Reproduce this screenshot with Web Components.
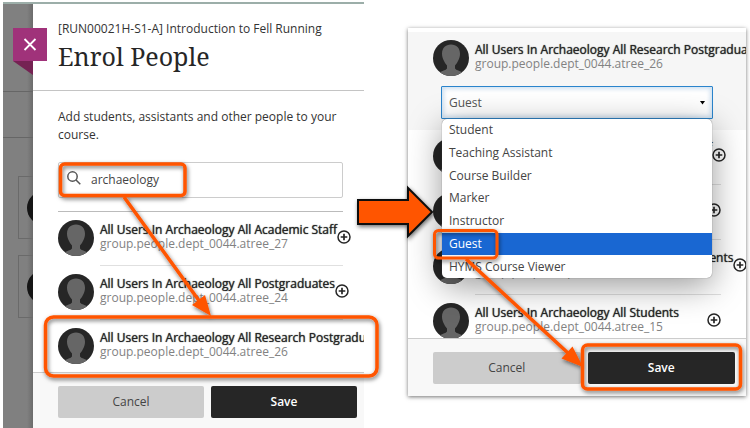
<!DOCTYPE html>
<html lang="en">
<head>
<meta charset="utf-8">
<meta name="viewport" content="width=device-width, initial-scale=1">
<title>Enrol People</title>
<style>
    body {
        margin: 0;
        background: #fff;
        color: #333;
        font: 12px/18px "Open Sans", "Noto Sans", sans-serif;
    }
</style>
</head>
<body>
<enrol-guide>
    <enrol-sheet slot="search" course="[RUN00021H-S1-A] Introduction to Fell Running" heading="Enrol People">
        <p slot="intro">Add students, assistants and other people to your course.</p>
        <people-search slot="intro" value="archaeology"></people-search>
        <person-row name="All Users In Archaeology All Academic Staff" group="group.people.dept_0044.atree_27" addable></person-row>
        <person-row name="All Users In Archaeology All Postgraduates" group="group.people.dept_0044.atree_24" addable></person-row>
        <person-row name="All Users In Archaeology All Research Postgraduates" group="group.people.dept_0044.atree_26"></person-row>
        <action-bar slot="footer"></action-bar>
    </enrol-sheet>
    <role-card slot="role">
        <person-row slot="selected" name="All Users In Archaeology All Research Postgraduates" group="group.people.dept_0044.atree_26"></person-row>
        <role-picker slot="selected" value="Guest"></role-picker>
        <person-row name="All Users In Archaeology All Academic Staff" group="group.people.dept_0044.atree_27" addable></person-row>
        <person-row name="All Users In Archaeology All Staff" group="group.people.dept_0044.atree_25" addable></person-row>
        <person-row name="All Users In Archaeology All Research Students" group="group.people.dept_0044.atree_28" addable></person-row>
        <person-row name="All Users In Archaeology All Students" group="group.people.dept_0044.atree_15" addable></person-row>
        <action-bar slot="footer"></action-bar>
    </role-card>
</enrol-guide>

<script>
const html = String.raw

class UserAvatar extends HTMLElement {
    connectedCallback() {
        this.attachShadow({ mode: "open" })
        this.shadowRoot.innerHTML = html`
            <style>
                :host { display: block; width: 36px; height: 36px; flex: none; }
                svg { display: block; width: 100%; height: 100%; }
            </style>
            <svg viewBox="0 0 36 36" aria-hidden="true">
                <clipPath id="disc"><circle cx="18" cy="18" r="18"/></clipPath>
                <g clip-path="url(#disc)">
                    <rect width="36" height="36" fill="#262626"/>
                    <path fill="#666" d="M18 4.500c5.600 0 9 3.700 9 9.200 0 3.200-1 5-2 7.300-.8 1.900-1.900 3.300-3 4.400v3.200c1.200 1.800 4.800 2.400 8 3.900V36H6v-3.500c3.200-1.500 6.800-2.100 8-3.900v-3.200c-1.100-1.100-2.200-2.500-3-4.400-1-2.300-2-4.100-2-7.300 0-5.500 3.400-9.200 9-9.200z"/>
                </g>
            </svg>
        `
    }
}
customElements.define("user-avatar", UserAvatar)

class PersonRow extends HTMLElement {
    connectedCallback() {
        this.attachShadow({ mode: "open" })
        this.shadowRoot.innerHTML = this.render()
    }

    renderAdd() {
        if (!this.hasAttribute("addable"))
            return ""
        return html`
            <button aria-label="Add ${this.getAttribute("name")}">
                <svg viewBox="0 0 14 14" fill="none" stroke="#262626">
                    <circle cx="7" cy="7" r="6" stroke-width="1.500"/>
                    <path d="M7 3.700v6.600M3.700 7h6.600" stroke-width="1.700"/>
                </svg>
            </button>
        `
    }

    render() {
        return html`
            <style>
                :host { display: flex; gap: 6px; }
                .line {
                    flex: 1;
                    min-width: 0;
                    display: flex;
                    align-items: center;
                    white-space: nowrap;
                    box-sizing: border-box;
                    height: var(--row-height, 46px);
                    padding-bottom: 12px;
                    border-bottom: 1px solid var(--row-line, #e0e0e0);
                }
                .text { flex: 1 0 auto; line-height: 14px; }
                strong { display: block; font-weight: 500; color: #262626; text-shadow: 0 0 1px #262626; }
                span { display: block; color: #828282; }
                button { flex: none; width: 14px; height: 14px; padding: 0; border: 0; background: none; }
                svg { display: block; width: 14px; height: 14px; }
            </style>
            <user-avatar></user-avatar>
            <div class="line">
                <div class="text">
                    <strong>${this.getAttribute("name")}</strong>
                    <span>${this.getAttribute("group")}</span>
                </div>
                ${this.renderAdd()}
            </div>
        `
    }
}
customElements.define("person-row", PersonRow)

class ActionBar extends HTMLElement {
    connectedCallback() {
        this.attachShadow({ mode: "open" })
        this.shadowRoot.innerHTML = html`
            <style>
                :host {
                    display: grid;
                    grid-template-columns: 1fr 1fr;
                    gap: 7px;
                    padding: 13px var(--bar-end, 7px) var(--bar-bottom, 10px) 25px;
                    background: #f8f8f8;
                    border-top: 1px solid #ccc;
                }
                button {
                    height: 32px;
                    padding: 0;
                    border: 0;
                    border-radius: 2px;
                    background: #ccc;
                    color: #444;
                    font: inherit;
                }
                .save { background: #262626; color: #fff; font-weight: 600; }
            </style>
            <button>Cancel</button>
            <button class="save">Save</button>
        `
    }
}
customElements.define("action-bar", ActionBar)

class PeopleSearch extends HTMLElement {
    connectedCallback() {
        this.attachShadow({ mode: "open" })
        this.shadowRoot.innerHTML = html`
            <style>
                :host { display: block; }
                label {
                    display: flex;
                    align-items: center;
                    gap: 10px;
                    height: 34px;
                    padding: 0 8px;
                    border: 1px solid #ccc;
                    border-radius: 2px;
                }
                svg { flex: none; width: 14px; height: 14px; margin-bottom: 4px; }
                input {
                    flex: 1;
                    min-width: 0;
                    padding: 0;
                    border: 0;
                    outline: 0;
                    background: none;
                    color: #444;
                    font: inherit;
                }
            </style>
            <label>
                <svg viewBox="0 0 14 14" fill="none" stroke="#555" stroke-width="1.500" aria-hidden="true">
                    <circle cx="5.500" cy="5.500" r="4.700"/>
                    <path d="M9 9l4.300 4.300"/>
                </svg>
                <input type="text" aria-label="Search people" value="${this.getAttribute("value")}">
            </label>
        `
    }
}
customElements.define("people-search", PeopleSearch)

class EnrolSheet extends HTMLElement {
    connectedCallback() {
        this.attachShadow({ mode: "open" })
        this.shadowRoot.innerHTML = this.render()
    }

    render() {
        return html`
            <style>
                :host {
                    display: grid;
                    grid-template-columns: 30px minmax(0, 1fr);
                    overflow: hidden;
                    box-sizing: border-box;
                    border-top: 2px solid #9caea9;
                    --row-height: 46px;
                }
                .behind {
                    display: flex;
                    flex-direction: column;
                    overflow: hidden;
                    background: linear-gradient(90deg, #808080 24px, #6c6c6c);
                }
                .strip { flex: none; box-sizing: border-box; border-bottom: 1px solid #666; height: 88px; }
                .strip.low { height: 46px; }
                .tile {
                    flex: none;
                    display: flex;
                    align-items: center;
                    box-sizing: border-box;
                    height: 63px;
                    margin: 38px 0 0 15px;
                    padding-left: 8px;
                    border: 1px solid #6a6a6a;
                    border-right: 0;
                }
                .tile + .tile { margin-top: 16px; }
                .tile i { flex: none; width: 34px; height: 34px; border-radius: 50%; background: #151515; }
                .sheet { position: relative; display: flex; flex-direction: column; min-width: 0; background: #fff; }
                .close {
                    position: absolute;
                    top: 24px;
                    left: -20px;
                    width: 34px;
                    height: 47px;
                    padding: 0;
                    border: 0;
                    background: none;
                }
                .close svg { display: block; }
                header { padding: 16px 25px 15px; border-bottom: 1px solid #c4c4c4; }
                header p { margin: 0; }
                h1 {
                    margin: 0;
                    color: #262626;
                    font: 25px/37px "Noto Serif", "DejaVu Serif", serif;
                }
                .body { flex: 1; padding: 17px 21px 0 25px; }
                .intro { display: grid; gap: 18px; padding-bottom: 13px; border-bottom: 1px solid #bbb; }
                .list {
                    display: grid;
                    grid-template-columns: minmax(0, 1fr);
                    gap: 8px;
                    padding-top: 8px;
                    margin-bottom: -2px;
                }
                ::slotted(p) { margin: 0; }
                ::slotted(person-row:last-of-type) { --row-line: transparent; }
                ::slotted(action-bar) { position: relative; }
            </style>
            <div class="behind">
                <div class="strip"></div>
                <div class="strip low"></div>
                <div class="tile"><i></i></div>
                <div class="tile"><i></i></div>
            </div>
            <section class="sheet">
                <header>
                    <p>${this.getAttribute("course")}</p>
                    <h1>${this.getAttribute("heading")}</h1>
                </header>
                <div class="body">
                    <div class="intro"><slot name="intro"></slot></div>
                    <div class="list"><slot></slot></div>
                </div>
                <slot name="footer"></slot>
                <button class="close" aria-label="Close">
                    <svg width="34" height="47" viewBox="0 0 34 47">
                        <path fill="#752253" d="M0 33h20v14z"/>
                        <path fill="#a0327a" d="M0 0h34v33H0z"/>
                        <path stroke="#fff" stroke-width="1.800" d="M11.500 11l11 11M22.500 11l-11 11"/>
                    </svg>
                </button>
            </section>
        `
    }
}
customElements.define("enrol-sheet", EnrolSheet)

class RolePicker extends HTMLElement {
    static roles = ["Student", "Teaching Assistant", "Course Builder", "Marker", "Instructor", "Guest", "HYMS Course Viewer"]

    connectedCallback() {
        this.attachShadow({ mode: "open" })
        this.shadowRoot.innerHTML = this.render()
    }

    render() {
        const value = this.getAttribute("value")
        const options = RolePicker.roles.map(role => html`<option ${role === value ? "selected" : ""}>${role}</option>`)
        const items = RolePicker.roles.map(role => html`<li role="option" aria-selected="${role === value}">${role}</li>`)
        return html`
            <style>
                :host { display: block; position: relative; }
                select {
                    appearance: none;
                    display: block;
                    box-sizing: border-box;
                    width: 100%;
                    height: 33px;
                    padding: 0 7px;
                    border: 1px solid #2a84cc;
                    border-radius: 1px;
                    outline: 0;
                    background: #fff;
                    box-shadow: inset 0 0 4px 2px #cfe0f0;
                    color: #555;
                    font: inherit;
                }
                svg { position: absolute; top: 15px; right: 8px; width: 5px; height: 4px; }
                ul {
                    position: absolute;
                    z-index: 1;
                    top: 33px;
                    left: 1px;
                    right: 1px;
                    display: grid;
                    grid-auto-rows: 1fr;
                    height: 159px;
                    margin: 0;
                    padding: 0;
                    overflow: hidden;
                    list-style: none;
                    background: #fff;
                    border-radius: 5px;
                    box-shadow: 0 0 1px #555, 0 8px 34px rgba(0, 0, 0, .4);
                }
                li { display: flex; align-items: center; padding: 0 7px; color: #444; }
                li[aria-selected="true"] { background: #1967d2; color: #fff; }
            </style>
            <select aria-label="Role">${options.join("")}</select>
            <svg viewBox="0 0 5 4" aria-hidden="true"><path d="M0 0h5L2.500 3.500z"/></svg>
            <ul role="listbox" aria-label="Roles">${items.join("")}</ul>
        `
    }
}
customElements.define("role-picker", RolePicker)

class RoleCard extends HTMLElement {
    connectedCallback() {
        this.attachShadow({ mode: "open" })
        this.shadowRoot.innerHTML = html`
            <style>
                :host {
                    display: block;
                    overflow: hidden;
                    background: #fff;
                    box-shadow: 0 1px 4px rgba(0, 0, 0, .55);
                    --bar-end: 11px;
                    --bar-bottom: 12px;
                }
                .selected {
                    padding: 8px 33px 11px 25px;
                    margin-top: 4px;
                    background: #f6f6f6;
                    --row-line: transparent;
                }
                .list {
                    display: grid;
                    grid-template-columns: minmax(0, 1fr);
                    gap: 8px;
                    padding: 8px 25px 0;
                    margin-bottom: -12px;
                    --row-height: 47px;
                }
                ::slotted(role-picker) { margin-left: 8px; }
                ::slotted(action-bar) { position: relative; }
            </style>
            <div class="selected"><slot name="selected"></slot></div>
            <div class="list"><slot></slot></div>
            <slot name="footer"></slot>
        `
    }
}
customElements.define("role-card", RoleCard)

class EnrolGuide extends HTMLElement {
    connectedCallback() {
        this.attachShadow({ mode: "open" })
        this.shadowRoot.innerHTML = html`
            <style>
                :host {
                    position: relative;
                    display: grid;
                    grid-template-columns: minmax(0, 361fr) minmax(0, 338fr);
                    gap: 44px;
                    box-sizing: border-box;
                    min-height: 100vh;
                    padding: 2px 4px 0 3px;
                }
                ::slotted([slot="role"]) { align-self: start; margin-top: 26px; }
                .marks {
                    position: absolute;
                    z-index: 2;
                    inset: 0;
                    width: 100%;
                    height: 100%;
                    pointer-events: none;
                }
            </style>
            <slot name="search"></slot>
            <slot name="role"></slot>
            <svg class="marks" viewBox="0 0 750 428" aria-hidden="true">
                <defs>
                    <filter id="drop" filterUnits="userSpaceOnUse" x="0" y="0" width="750" height="428">
                        <feDropShadow dx="1" dy="2" stdDeviation="2" flood-opacity=".55"/>
                    </filter>
                </defs>
                <g filter="url(#drop)" fill="none" stroke="#ff5400" stroke-width="3.500">
                    <path d="M124 197l76 105"/>
                    <path fill="#ff5400" stroke="none" d="M211 316l-19-11 13-10z"/>
                    <rect x="60.500" y="164" width="124.500" height="31.500" rx="4"/>
                    <rect x="45.500" y="317" width="331.500" height="59" rx="8"/>
                    <path d="M466 259l102 94"/>
                    <path fill="#ff5400" stroke="none" d="M583 367l-21.500-8.500 11-12z"/>
                    <rect x="434.500" y="230.500" width="62.500" height="27.500" rx="4" stroke-width="3"/>
                    <rect x="582.500" y="345" width="158" height="44" rx="5"/>
                    <path fill="#ff5400" stroke="#111" stroke-width="2" d="M358 200h50v-12l24 24-24 24v-12h-50z"/>
                </g>
            </svg>
        `
    }
}
customElements.define("enrol-guide", EnrolGuide)
</script>
</body>
</html>
